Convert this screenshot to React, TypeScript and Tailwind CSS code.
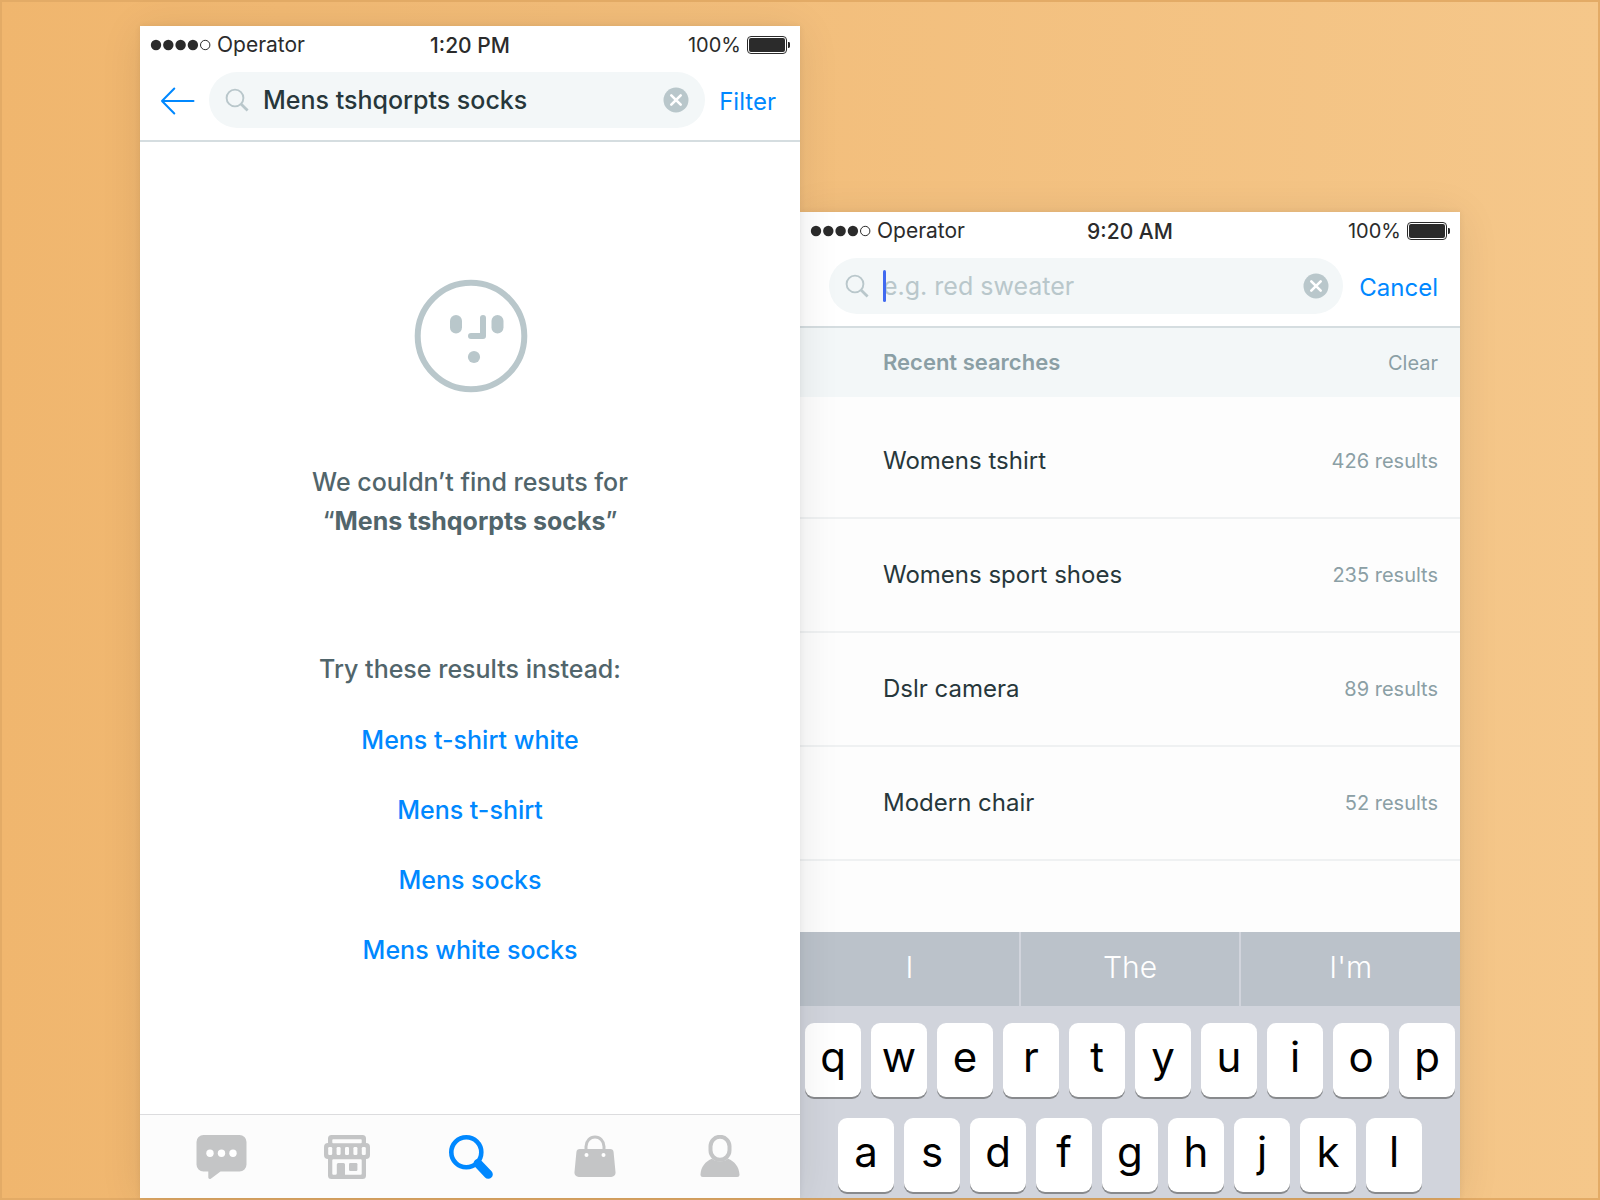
import type { ReactNode } from "react";

const FONT = "font-['Inter','Liberation_Sans',sans-serif]";

function StatusBar({ time }: { time: string }) {
  return (
    <div className="grid h-9 grid-cols-3 items-center px-2.5 pt-0.5 text-[#2b2b2b]">
      <div className="flex items-center gap-1.5 text-[21px] leading-7">
        <svg width="61" height="12" viewBox="0 0 61 12" fill="#2b2b2b" aria-hidden="true">
          <circle cx="6" cy="6" r="5.2" />
          <circle cx="18.3" cy="6" r="5.2" />
          <circle cx="30.6" cy="6" r="5.2" />
          <circle cx="42.9" cy="6" r="5.2" />
          <circle cx="55.2" cy="6" r="4.7" fill="none" stroke="#2b2b2b" strokeWidth="1" />
        </svg>
        <span>Operator</span>
      </div>
      <div className="pt-0.5 text-center text-[21px] leading-7 font-medium">{time}</div>
      <div className="flex items-center justify-end gap-1.5 text-xl leading-7">
        <span>100%</span>
        <svg width="43" height="18" viewBox="0 0 43 18" aria-hidden="true">
          <rect x="0.5" y="0.5" width="39" height="17" rx="3.5" fill="#fff" stroke="#2b2b2b" strokeWidth="1" />
          <rect x="2" y="2" width="36" height="14" rx="2" fill="#2b2b2b" />
          <path d="M41 6h.6a1.4 1.4 0 0 1 1.4 1.4v3.2a1.4 1.4 0 0 1-1.4 1.4H41z" fill="#2b2b2b" />
        </svg>
      </div>
    </div>
  );
}

function SearchGlyph() {
  return (
    <svg className="shrink-0" width="24" height="24" viewBox="0 0 24 24" fill="none" stroke="#b9c7cb" aria-hidden="true">
      <circle cx="10" cy="10" r="8.4" strokeWidth="1.9" />
      <path d="M16 16l6.6 6.4" strokeWidth="2.8" />
    </svg>
  );
}

function ClearButton() {
  return (
    <button type="button" aria-label="Clear search text" className="shrink-0">
      <svg className="block" width="26" height="26" viewBox="0 0 26 26" aria-hidden="true">
        <circle cx="13" cy="13" r="12.5" fill="#b9c7cb" />
        <path d="M8.3 8.3l9.4 9.4M17.700 8.3l-9.4 9.4" stroke="#fff" strokeWidth="2.6" strokeLinecap="round" />
      </svg>
    </button>
  );
}

function Face() {
  return (
    <svg width="116" height="114" viewBox="-2 0 116 114" fill="#b9c7cb" aria-hidden="true">
      <circle cx="57" cy="57" r="53.3" fill="none" stroke="#b9c7cb" strokeWidth="6" />
      <rect x="36" y="36" width="12" height="18.4" rx="6" />
      <rect x="77.5" y="36" width="12" height="18.4" rx="6" />
      <path d="M69 39v18H57" fill="none" stroke="#b9c7cb" strokeWidth="6" strokeLinecap="round" strokeLinejoin="round" />
      <circle cx="60" cy="78" r="6.1" />
    </svg>
  );
}

const tabs: { label: string; icon: ReactNode }[] = [
  {
    label: "Messages",
    icon: (
      <svg width="52" height="44" viewBox="0 0 52 44" aria-hidden="true">
        <path
          d="M7.5 0h36a7 7 0 0 1 7 7v22.5a7 7 0 0 1-7 7H24.500L14.800 43.700a1.600 1.600 0 0 1-2.500-1.300V36.500H7.500a7 7 0 0 1-7-7V7a7 7 0 0 1 7-7z"
          fill="#c4c5c6"
        />
        <g fill="#fff">
          <circle cx="14" cy="18.300" r="3.700" />
          <circle cx="25.500" cy="18.300" r="3.700" />
          <circle cx="37" cy="18.300" r="3.700" />
        </g>
      </svg>
    ),
  },
  {
    label: "Store",
    icon: (
      <svg width="46" height="44" viewBox="0 0 46 44" aria-hidden="true">
        <path
          d="M7.500 0h31A3.500 3.500 0 0 1 42 3.500V8a4 4 0 0 1 4 4v8a4 4 0 0 1-4 4v16.500a3.500 3.500 0 0 1-3.500 3.500h-31A3.500 3.500 0 0 1 4 40.500V24a4 4 0 0 1-4-4v-8a4 4 0 0 1 4-4V3.500A3.500 3.500 0 0 1 7.500 0z"
          fill="#c4c5c6"
        />
        <g fill="#fcfcfc">
          <rect x="8.300" y="4.200" width="29.400" height="4" rx="0.800" />
          <rect x="4.200" y="12" width="4" height="8" rx="1.300" />
          <rect x="12.600" y="12" width="4" height="8" rx="1.300" />
          <rect x="21" y="12" width="4" height="8" rx="1.300" />
          <rect x="29.400" y="12" width="4" height="8" rx="1.300" />
          <rect x="37.800" y="12" width="4" height="8" rx="1.300" />
          <path d="M9.300 24.200h27.400a1 1 0 0 1 1 1v13.600a1 1 0 0 1-1 1H21V29.500a1.500 1.500 0 0 0-1.500-1.500h-5.200a1.500 1.500 0 0 0-1.500 1.500v8.800a1.500 1.500 0 0 1-1.500 1.500h-2a1 1 0 0 1-1-1V25.200a1 1 0 0 1 1-1z" />
        </g>
        <rect x="25" y="28" width="8.400" height="8" rx="1.200" fill="#c4c5c6" />
      </svg>
    ),
  },
  {
    label: "Search",
    icon: (
      <svg width="44" height="44" viewBox="0 0 44 44" fill="none" stroke="#0088ff" aria-hidden="true">
        <circle cx="17.300" cy="17.300" r="15" strokeWidth="4.600" />
        <path d="M29 28.500L39.300 39.300" strokeWidth="9" strokeLinecap="round" />
      </svg>
    ),
  },
  {
    label: "Bag",
    icon: (
      <svg width="42" height="42" viewBox="0 0 42 42" aria-hidden="true">
        <path d="M12 15v-3.500a9 9.500 0 0 1 18 0V15" fill="none" stroke="#c4c5c6" strokeWidth="3" />
        <path
          d="M6 14h30a3.600 3.600 0 0 1 3.600 3.300L41.500 37a4.400 4.400 0 0 1-4.400 5H4.900A4.400 4.400 0 0 1 .5 37L2.400 17.300A3.600 3.600 0 0 1 6 14z"
          fill="#c4c5c6"
        />
        <circle cx="12.500" cy="20" r="2" fill="#fff" />
        <circle cx="29.500" cy="20" r="2" fill="#fff" />
      </svg>
    ),
  },
  {
    label: "Profile",
    icon: (
      <svg width="40" height="42" viewBox="0 0 40 42" aria-hidden="true">
        <rect x="10.500" y="1.800" width="19" height="23" rx="9.500" fill="none" stroke="#c4c5c6" strokeWidth="4" />
        <path
          d="M12 23.800c2.200 1.700 5 2.600 8 2.600s5.800-.9 8-2.600c6.600 2.600 11 8 11.500 15.700a2.300 2.300 0 0 1-2.300 2.500H2.800a2.300 2.300 0 0 1-2.300-2.500C1 31.800 5.400 26.400 12 23.800z"
          fill="#c4c5c6"
        />
      </svg>
    ),
  },
];

const suggestions = ["Mens t-shirt white", "Mens t-shirt", "Mens socks", "Mens white socks"];

const recent = [
  { term: "Womens tshirt", count: 426 },
  { term: "Womens sport shoes", count: 235 },
  { term: "Dslr camera", count: 89 },
  { term: "Modern chair", count: 52 },
];

const keyRows = ["qwertyuiop", "asdfghjkl"];

function NoResults() {
  return (
    <section className="relative z-10 mt-6 flex min-w-0 flex-1 flex-col bg-white shadow-[0_4px_40px_rgba(0,0,0,0.09),0_0_6px_rgba(0,0,0,0.07)]">
      <header className="border-b-2 border-[#d5dde0]">
        <StatusBar time="1:20 PM" />
        <div className="flex items-center pt-2.5 pr-6 pb-3 pl-5">
          <button type="button" aria-label="Back" className="shrink-0 pt-0.5">
            <svg className="block" width="36" height="28" viewBox="0 0 36 28" fill="none" stroke="#0088ff" strokeWidth="2" strokeLinecap="round" strokeLinejoin="round" aria-hidden="true">
              <path d="M33.500 14H2M14.300 1.500L2 14l12.300 12.500" />
            </svg>
          </button>
          <div className="ml-[13px] flex h-14 min-w-0 flex-1 items-center rounded-full bg-[#f3f7f8] px-4">
            <SearchGlyph />
            <input
              type="text"
              aria-label="Search"
              defaultValue="Mens tshqorpts socks"
              className="ml-3.5 min-w-0 flex-1 bg-transparent text-[25px] leading-8 font-medium text-[#27373b] outline-none"
            />
            <ClearButton />
          </div>
          <button type="button" className="ml-3.5 pt-1 text-2xl text-[#0088ff]">
            Filter
          </button>
        </div>
      </header>

      <div className="flex flex-1 flex-col items-center pt-[137px] text-center">
        <Face />
        <p className="mt-[70px] text-[25px] leading-[39px] font-medium text-[#51656b]">
          We couldn’t find resuts for
          <br />“<strong className="font-bold">Mens tshqorpts socks</strong>”
        </p>
        <p className="mt-27 text-[25px] leading-10 font-medium text-[#51656b]">Try these results instead:</p>
        <ul className="mt-[35px] flex flex-col gap-[38px] text-[25px] leading-8 font-medium">
          {suggestions.map((s) => (
            <li key={s}>
              <a href="#" className="text-[#0088ff]">
                {s}
              </a>
            </li>
          ))}
        </ul>
      </div>

      <nav className="flex h-[84px] border-t border-[#dcdcde] bg-[#fcfcfc] pr-[18px] pl-5">
        {tabs.map((t) => (
          <button key={t.label} type="button" aria-label={t.label} className="flex flex-1 items-start justify-center pt-5">
            {t.icon}
          </button>
        ))}
      </nav>
    </section>
  );
}

function RecentSearches() {
  return (
    <section className="mt-[210px] flex min-w-0 flex-1 flex-col bg-[#fdfdfd] shadow-[0_4px_40px_rgba(0,0,0,0.09),0_0_6px_rgba(0,0,0,0.07)]">
      <header className="border-b-2 border-[#d5dde0] bg-white">
        <StatusBar time="9:20 AM" />
        <div className="flex items-center pt-2.5 pr-[22px] pb-3 pl-[29px]">
          <div className="flex h-14 min-w-0 flex-1 items-center rounded-full bg-[#f3f7f8] pr-3.5 pl-4">
            <SearchGlyph />
            <div className="relative ml-3.5 min-w-0 flex-1">
              <input
                type="text"
                aria-label="Search"
                placeholder="e.g. red sweater"
                className="block w-full bg-transparent text-[25px] leading-8 outline-none placeholder:text-[#b9c7cb]"
              />
              <span className="absolute top-0 left-0 h-8 w-[3px] rounded-full bg-[#416af0]" />
            </div>
            <ClearButton />
          </div>
          <button type="button" className="ml-4 pt-1 text-2xl text-[#0088ff]">
            Cancel
          </button>
        </div>
      </header>

      <div className="flex h-[69px] items-center justify-between bg-[#f3f7f8] pr-[22px] pl-[83px] text-[#8b9fa5]">
        <h2 className="pb-0.5 text-[22px] leading-7 font-semibold">Recent searches</h2>
        <button type="button" className="text-xl leading-7">
          Clear
        </button>
      </div>

      <ul className="flex-1 pt-2">
        {recent.map((r) => (
          <li key={r.term} className="border-b-2 border-[#eff1f2]">
            <a href="#" className="flex h-28 items-center justify-between pr-[22px] pl-[83px]">
              <span className="text-2xl text-[#27373b]">{r.term}</span>
              <span className="text-xl leading-7 text-[#8b9fa5]">{r.count} results</span>
            </a>
          </li>
        ))}
      </ul>

      <div className="bg-[#d1d4dc]">
        <div className="grid h-[74px] grid-cols-3 gap-0.5 text-[30px] leading-9 font-light text-white">
          {["I", "The", "I'm"].map((w) => (
            <button key={w} type="button" className="bg-[#bbc2ca] pb-1">
              {w}
            </button>
          ))}
        </div>
        <div className="flex flex-col gap-[21px] px-[5px] pt-[17px] pb-1.5">
          {keyRows.map((row) => (
            <div key={row} className="flex justify-center gap-2.5">
              {row.split("").map((k) => (
                <button
                  key={k}
                  type="button"
                  className="flex h-[74px] w-14 items-center justify-center rounded-[9px] bg-white pb-1.5 text-[42px] leading-none text-black shadow-[0_2px_0_#888a8d]"
                >
                  {k}
                </button>
              ))}
            </div>
          ))}
        </div>
      </div>
    </section>
  );
}

export default function App() {
  return (
    <main className={`${FONT} flex min-h-screen border-2 border-[#e3ab66] bg-linear-to-r from-[#f0b66e] to-[#f5c78a] px-[138px]`}>
      <NoResults />
      <RecentSearches />
    </main>
  );
}
